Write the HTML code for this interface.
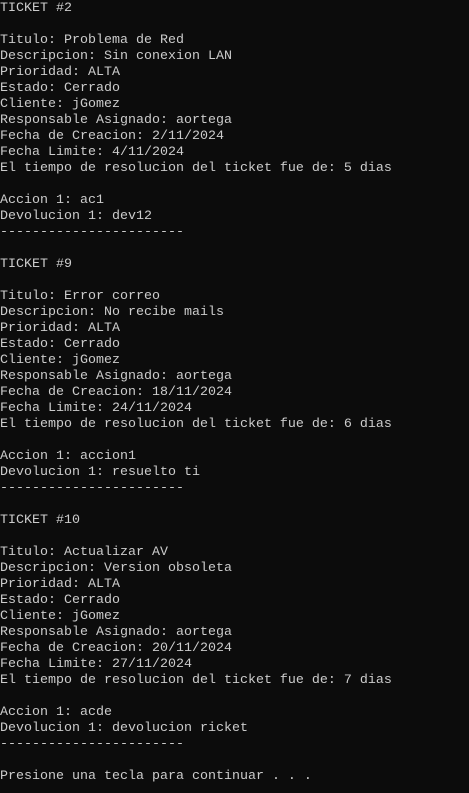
<!DOCTYPE html>
<html><head><style>
html,body{margin:0;padding:0;background:#0c0c0c;width:469px;height:793px;overflow:hidden}
pre{margin:0;padding:1px 0 0 0;font-family:"Liberation Mono",monospace;font-size:13.33px;line-height:16px;color:#cccccc;white-space:pre}
</style></head><body><pre>TICKET #2

Titulo: Problema de Red
Descripcion: Sin conexion LAN
Prioridad: ALTA
Estado: Cerrado
Cliente: jGomez
Responsable Asignado: aortega
Fecha de Creacion: 2/11/2024
Fecha Limite: 4/11/2024
El tiempo de resolucion del ticket fue de: 5 dias

Accion 1: ac1
Devolucion 1: dev12
-----------------------

TICKET #9

Titulo: Error correo
Descripcion: No recibe mails
Prioridad: ALTA
Estado: Cerrado
Cliente: jGomez
Responsable Asignado: aortega
Fecha de Creacion: 18/11/2024
Fecha Limite: 24/11/2024
El tiempo de resolucion del ticket fue de: 6 dias

Accion 1: accion1
Devolucion 1: resuelto ti
-----------------------

TICKET #10

Titulo: Actualizar AV
Descripcion: Version obsoleta
Prioridad: ALTA
Estado: Cerrado
Cliente: jGomez
Responsable Asignado: aortega
Fecha de Creacion: 20/11/2024
Fecha Limite: 27/11/2024
El tiempo de resolucion del ticket fue de: 7 dias

Accion 1: acde
Devolucion 1: devolucion ricket
-----------------------

Presione una tecla para continuar . . .</pre></body></html>
